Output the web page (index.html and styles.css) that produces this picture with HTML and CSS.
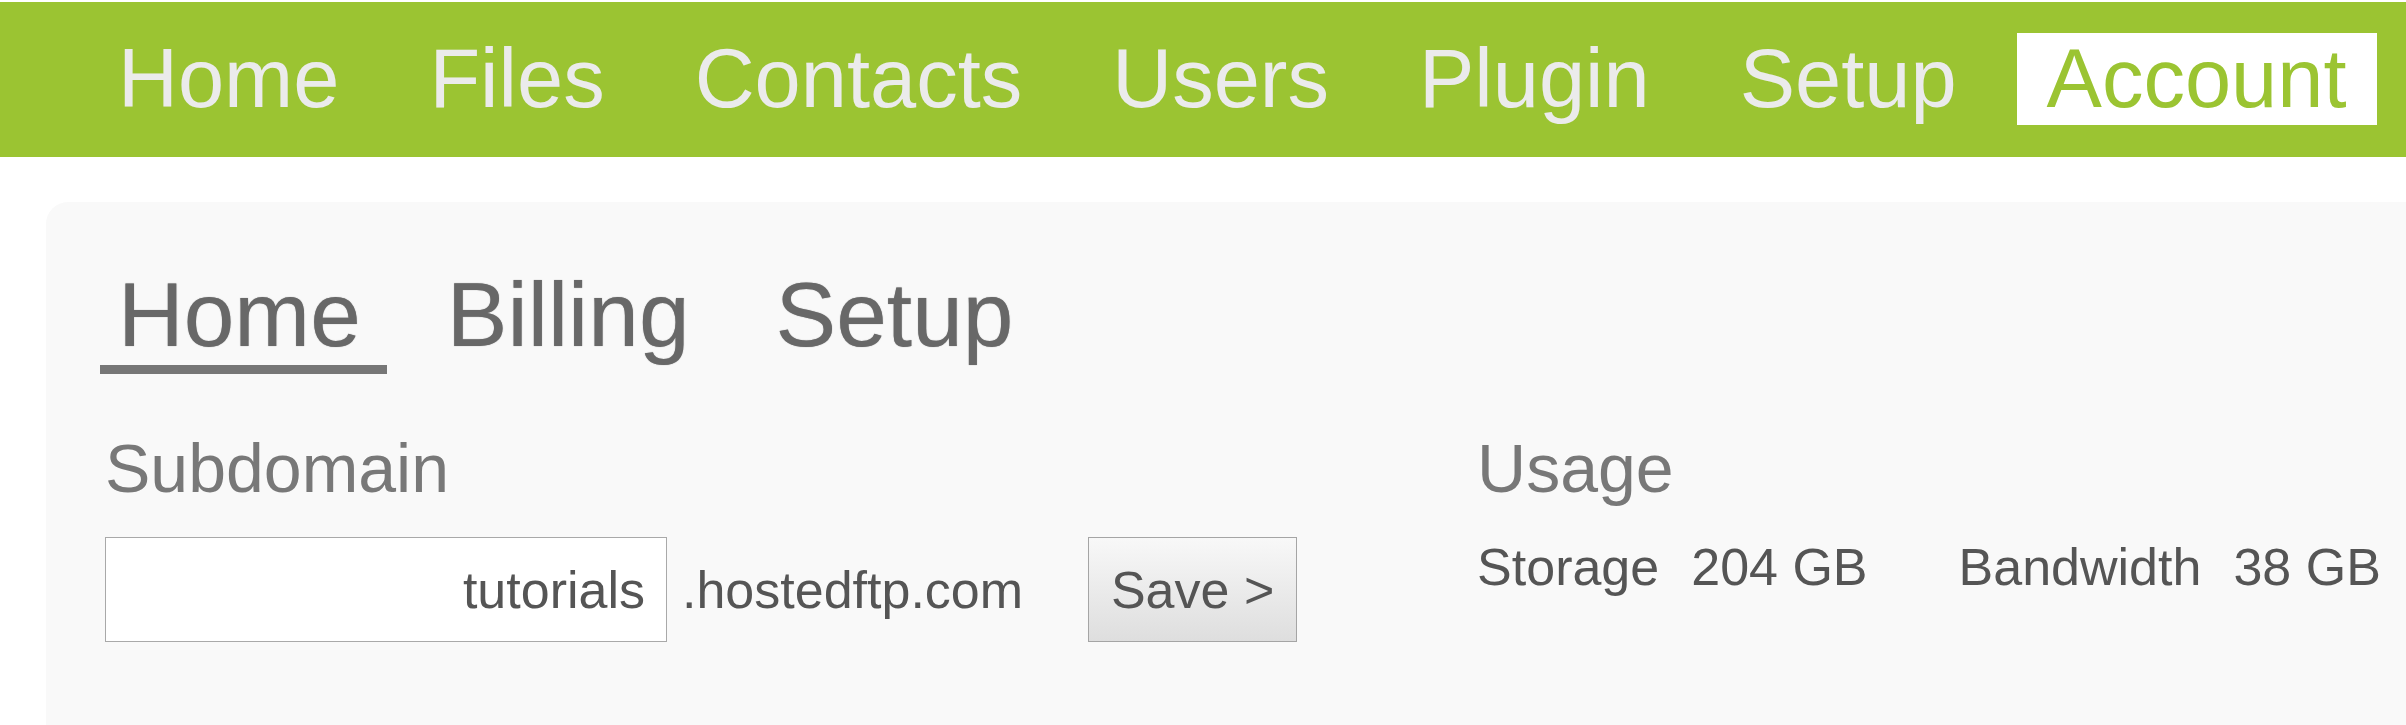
FILE: index.html
```html
<!DOCTYPE html>
<html lang="en">
<head>
<meta charset="utf-8">
<title>Account</title>
<link rel="stylesheet" href="styles.css">
</head>
<body>
<nav class="topnav">
  <ul class="topnav-list">
    <li class="topnav-item">Home</li>
    <li class="topnav-item">Files</li>
    <li class="topnav-item">Contacts</li>
    <li class="topnav-item">Users</li>
    <li class="topnav-item">Plugin</li>
    <li class="topnav-item">Setup</li>
    <li class="topnav-item is-active">Account</li>
  </ul>
</nav>
<main class="panel">
  <ul class="tabs">
    <li class="tab is-active">Home</li>
    <li class="tab">Billing</li>
    <li class="tab">Setup</li>
  </ul>
  <div class="sections">
    <section class="subdomain">
      <h2 class="section-title">Subdomain</h2>
      <div class="subdomain-row">
        <input class="subdomain-input" type="text" value="tutorials">
        <span class="domain-suffix">.hostedftp.com</span>
        <button class="save-btn" type="button">Save &gt;</button>
      </div>
    </section>
    <section class="usage">
      <h2 class="section-title">Usage</h2>
      <div class="usage-row">
        <span class="stat"><span class="stat-label">Storage</span><span class="stat-value">204 GB</span></span>
        <span class="stat"><span class="stat-label">Bandwidth</span><span class="stat-value">38 GB</span></span>
      </div>
    </section>
  </div>
</main>
</body>
</html>
```

FILE: styles.css
```css
html, body {
  margin: 0;
  padding: 0;
  background: #ffffff;
}

body {
  font-family: "Liberation Sans", Arial, sans-serif;
}

.topnav {
  margin-top: 2px;
  background: #9bc432;
  padding: 31px 0 32px 88px;
}

.topnav-list {
  display: flex;
  gap: 30px;
  list-style: none;
  margin: 0;
  padding: 0;
}

.topnav-item {
  font-size: 83px;
  line-height: 92px;
  height: 92px;
  padding: 0 30px;
  color: #ebebeb;
  white-space: nowrap;
}

.topnav-item.is-active {
  background: #ffffff;
  color: #9bc432;
}

.panel {
  margin: 45px 0 0 46px;
  background: #f9f9f9;
  border-top-left-radius: 22px;
  padding: 63px 0 0 0;
  min-height: 523px;
  box-sizing: border-box;
}

.tabs {
  display: flex;
  gap: 42px;
  list-style: none;
  margin: 0 0 0 54px;
  padding: 0;
  filter: blur(0.6px);
}

.tab {
  font-size: 91px;
  line-height: 100px;
  padding: 0 26px 0 18px;
  color: #686868;
  text-shadow: 0 0 1px rgba(90, 90, 90, 0.7);
  border-bottom: 9px solid transparent;
  white-space: nowrap;
}

.tab.is-active {
  border-bottom-color: #777777;
}

.sections {
  display: flex;
  gap: 180px;
  margin: 54px 0 0 59px;
}

.section-title {
  margin: 0;
  font-size: 68px;
  line-height: 80px;
  font-weight: normal;
  color: #787878;
}

.subdomain-row {
  display: flex;
  align-items: center;
  margin-top: 29px;
}

.subdomain-input {
  width: 562px;
  height: 105px;
  box-sizing: border-box;
  border: 1px solid #a9a9a9;
  border-radius: 0;
  background: #ffffff;
  font-family: "Liberation Sans", Arial, sans-serif;
  font-size: 52px;
  color: #555555;
  text-align: right;
  padding: 0 21px;
  margin: 0;
  outline: none;
}

.domain-suffix {
  font-size: 52px;
  color: #555555;
  margin-left: 15px;
  white-space: nowrap;
}

.save-btn {
  margin: 0 0 0 65px;
  width: 209px;
  height: 105px;
  box-sizing: border-box;
  border: 1px solid #a5a5a5;
  border-radius: 0;
  background: linear-gradient(#f8f8f8, #dedede);
  font-family: "Liberation Sans", Arial, sans-serif;
  font-size: 52px;
  color: #555555;
  padding: 0;
  white-space: nowrap;
}

.usage-row {
  display: flex;
  gap: 91px;
  margin-top: 29px;
  font-size: 52px;
  line-height: 60px;
  color: #555555;
  white-space: nowrap;
}

.stat-value {
  margin-left: 32px;
}
```
